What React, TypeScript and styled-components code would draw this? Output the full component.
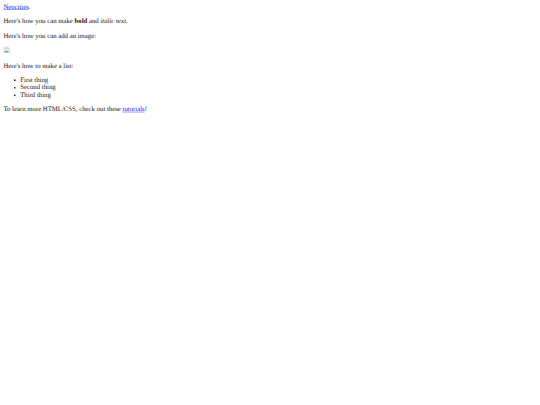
import React from 'react'
import styled, { createGlobalStyle } from 'styled-components'

const GlobalStyle = createGlobalStyle`
html, body {
  margin: 0;
  padding: 0;
  background: #ffffff;
  overflow: hidden;
}
`

const Page = () => {
  return (
    <Container>
      <Paragraph><TextLink href="#">Neocities</TextLink>.</Paragraph>
      <Paragraph>Here's how you can make <strong>bold</strong> and <em>italic</em> text.</Paragraph>
      <Paragraph>Here's how you can add an image:</Paragraph>
      <Paragraph>
        <BrokenImage viewBox="0 0 16 16" aria-hidden="true">
          <path d="M1 1h9l5 5v9H1z" fill="#f4f7fb" stroke="#a9a9a9" />
          <path d="M10 1v5h5" fill="#dfe5ec" stroke="#a9a9a9" />
          <path d="M2 14l4-5 2.5 2.5L10 10l4 4z" fill="#4f9e45" />
          <path d="M2.5 2.5h6v5h-6z" fill="#c3d8f4" />
        </BrokenImage>
      </Paragraph>
      <Paragraph>Here's how to make a list:</Paragraph>
      <List>
        <li>First thing</li>
        <li>Second thing</li>
        <li>Third thing</li>
      </List>
      <Paragraph>To learn more HTML/CSS, check out these <TextLink href="#">tutorials</TextLink>!</Paragraph>
    </Container>
  )
}

export default function App() {
  return (
    <>
      <GlobalStyle />
      <Page />
    </>
  )
}

const Container = styled.div`
width: 1280px;
padding: 8px;
box-sizing: border-box;
font-family: "Liberation Serif", "Times New Roman", serif;
font-size: 16px;
color: #000000;
transform: scale(0.4219);
transform-origin: 0 0;
opacity: 0.9;
text-rendering: geometricPrecision;
`

const Paragraph = styled.p`
margin: 16px 0;
&:first-child {
  margin-top: 0;
}
`

const TextLink = styled.a`
color: #0000ee;
text-decoration: underline;
`

const BrokenImage = styled.svg`
display: inline-block;
width: 16px;
height: 16px;
`

const List = styled.ul`
margin: 16px 0;
padding-left: 40px;
`
